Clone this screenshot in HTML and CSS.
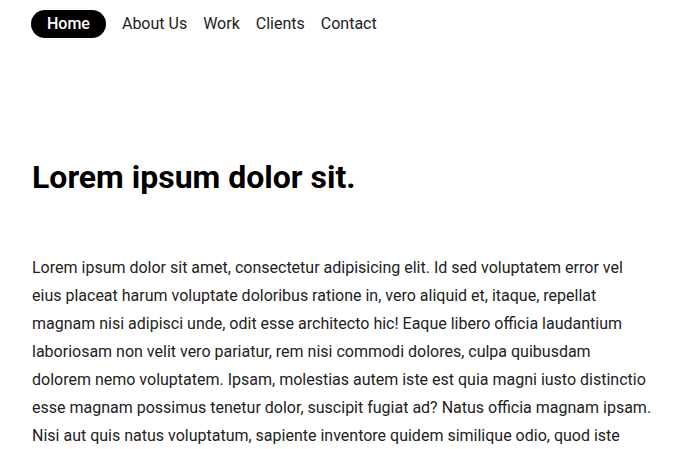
FILE: index.html
```html
<!DOCTYPE html>
<html lang="en">
<head>
<meta charset="utf-8">
<title>Lorem</title>
<link rel="stylesheet" href="styles.css">
</head>
<body>
<nav class="nav">
  <a class="nav-link active" href="#">Home</a>
  <a class="nav-link" href="#">About Us</a>
  <a class="nav-link" href="#">Work</a>
  <a class="nav-link" href="#">Clients</a>
  <a class="nav-link" href="#">Contact</a>
</nav>
<main class="content">
  <h1 class="title">Lorem ipsum dolor sit.</h1>
  <p class="text">Lorem ipsum dolor sit amet, consectetur adipisicing elit. Id sed voluptatem error vel eius placeat harum voluptate doloribus ratione in, vero aliquid et, itaque, repellat magnam nisi adipisci unde, odit esse architecto hic! Eaque libero officia laudantium laboriosam non velit vero pariatur, rem nisi commodi dolores, culpa quibusdam dolorem nemo voluptatem. Ipsam, molestias autem iste est quia magni iusto distinctio esse magnam possimus tenetur dolor, suscipit fugiat ad? Natus officia magnam ipsam. Nisi aut quis natus voluptatum, sapiente inventore quidem similique odio, quod iste</p>
</main>
</body>
</html>
```

FILE: styles.css
```css
html, body {
  margin: 0;
  padding: 0;
  background: #fff;
}
body {
  font-family: Roboto, "Liberation Sans", sans-serif;
  color: #222;
}
.nav {
  display: flex;
  align-items: center;
  padding: 10px 31px 0;
}
.nav-link {
  font-size: 16px;
  line-height: 28px;
  color: #222;
  text-decoration: none;
  padding: 0 8px;
}
.nav-link.active {
  background: #000;
  color: #fff;
  border-radius: 14px;
  padding: 0 16px;
  margin-right: 8px;
  font-weight: 500;
}
.content {
  padding: 0 32px;
}
.title {
  font-size: 32px;
  font-weight: 700;
  line-height: 38px;
  margin: 120px 0 0;
  color: #000;
}
.text {
  font-size: 16px;
  line-height: 28px;
  margin: 58px 0 0;
  color: #222;
}
```
